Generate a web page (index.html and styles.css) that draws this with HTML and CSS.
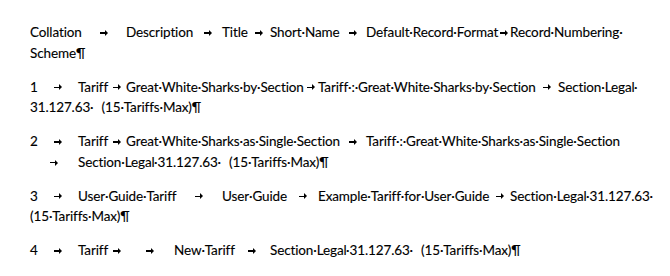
FILE: index.html
```html
<!DOCTYPE html>
<html>
<head>
<meta charset="utf-8">
<link rel="stylesheet" href="styles.css">
</head>
<body>
<div class="doc">
<p class="para">Collation<span class="t">	</span>Description<span class="t">	</span>Title<span class="t">	</span>Short·Name<span class="t">	</span>Default·Record·Format<span class="t">	</span>Record·Numbering·<br>Scheme¶</p>
<p class="para">1<span class="t">	</span>Tariff<span class="t">	</span>Great·White·Sharks·by·Section<span class="t">	</span>Tariff·:·Great·White·Sharks·by·Section<span class="t">	</span>Section·Legal·<br>31.127.63·<span class="gap"></span>(15·Tariffs·Max)¶</p>
<p class="para">2<span class="t">	</span>Tariff<span class="t">	</span>Great·White·Sharks·as·Single·Section<span class="t">	</span>Tariff·:·Great·White·Sharks·as·Single·Section<br><span class="t">	</span>Section·Legal·31.127.63·<span class="gap"></span>(15·Tariffs·Max)¶</p>
<p class="para">3<span class="t">	</span>User·Guide·Tariff<span class="t">	</span>User·Guide<span class="t">	</span>Example·Tariff·for·User·Guide<span class="t">	</span>Section·Legal·31.127.63·<br>(15·Tariffs·Max)¶</p>
<p class="para">4<span class="t">	</span>Tariff<span class="t">	</span><span class="t">	</span>New·Tariff<span class="t">	</span>Section·Legal·31.127.63·<span class="gap"></span>(15·Tariffs·Max)¶</p>
</div>
</body>
</html>
```

FILE: styles.css
```css
html, body {
  margin: 0;
  padding: 0;
  background: #fff;
  overflow: hidden;
}
.doc {
  padding: 22px 0 0 30px;
  font-family: Lato, "Open Sans", sans-serif;
  font-size: 13.5px;
  letter-spacing: -0.12px;
  color: #000;
  -webkit-text-stroke: 0.12px #000;
}
.para {
  margin: 0 0 13.4px 0;
  line-height: 20.6px;
  white-space: pre;
  tab-size: 48px;
  -moz-tab-size: 48px;
}
.t {
  position: relative;
}
.t::before {
  content: "";
  position: absolute;
  left: 50%;
  top: 50%;
  width: 5px;
  height: 1.5px;
  margin-left: -4px;
  margin-top: 0;
  background: #000;
}
.t::after {
  content: "";
  position: absolute;
  left: 50%;
  top: 50%;
  margin-left: 1px;
  margin-top: -2.25px;
  width: 0;
  height: 0;
  border-left: 3.5px solid #000;
  border-top: 3px solid transparent;
  border-bottom: 3px solid transparent;
}
.gap {
  display: inline-block;
  width: 8px;
}
```
